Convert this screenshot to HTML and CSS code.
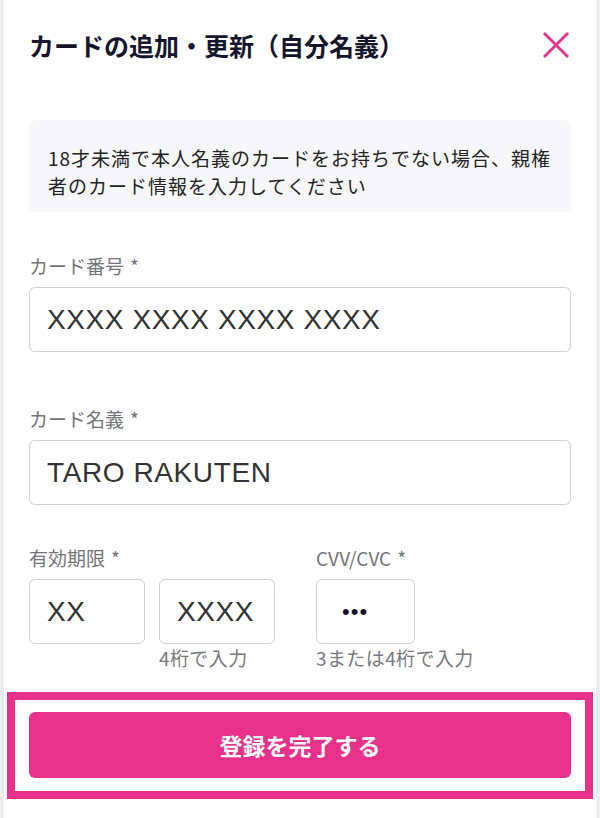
FILE: index.html
```html
<!DOCTYPE html>
<html lang="ja">

<head>
  <meta charset="UTF-8">
  <meta name="viewport" content="width=device-width, initial-scale=1.0">
  <title>カードの追加・更新</title>
  <link rel="stylesheet" href="styles.css">
</head>

<body>
  <div class="sheet">
    <header class="head">
      <h1 class="title">カードの追加・更新（自分名義）</h1>
      <button class="close" aria-label="閉じる">
        <svg width="28" height="28" viewBox="0 0 28 28">
          <path d="M2 2 L26 26 M26 2 L2 26" stroke="#dc3a8d" stroke-width="3" fill="none" />
        </svg>
      </button>
    </header>

    <p class="note">18才未満で本人名義のカードをお持ちでない場合、親権者のカード情報を入力してください</p>

    <div class="field card-no">
      <label class="label">カード番号<span class="req">*</span></label>
      <div class="input">XXXX XXXX XXXX XXXX</div>
    </div>

    <div class="field card-name">
      <label class="label">カード名義<span class="req">*</span></label>
      <div class="input">TARO RAKUTEN</div>
    </div>

    <div class="row">
      <div class="field">
        <label class="label">有効期限<span class="req">*</span></label>
        <div class="pair">
          <div>
            <div class="input small">XX</div>
          </div>
          <div>
            <div class="input small">XXXX</div>
            <div class="hint">4桁で入力</div>
          </div>
        </div>
      </div>
      <div class="field">
        <label class="label">CVV/CVC<span class="req">*</span></label>
        <div class="input cvv"><span class="dots">•••</span></div>
        <div class="hint">3または4桁で入力</div>
      </div>
    </div>

    <div class="submit-wrap">
      <button class="submit">登録を完了する</button>
    </div>
  </div>
</body>

</html>
```

FILE: styles.css
```css
body {
  margin: 0;
  background: #ececf1;
  font-family: 'Noto Sans CJK JP', sans-serif;
}

.sheet {
  margin: 0 4px;
  min-height: 818px;
  padding: 0 25px;
  background: #fff;
  box-sizing: border-box;
}

.head {
  height: 90px;
  display: flex;
  align-items: center;
  justify-content: space-between;
}

.title {
  margin: 0;
  font-size: 25px;
  font-weight: 700;
  color: #15152b;
}

.close {
  border: 0;
  background: none;
  padding: 0;
  margin-right: 1px;
  width: 28px;
  height: 28px;
}

.note {
  margin: 30px 0 0;
  padding: 24px 18px 12px 19px;
  background: #f7f7fa;
  border-radius: 6px;
  font-size: 19px;
  line-height: 28px;
  letter-spacing: 1px;
  color: #222;
}

.card-no {
  margin-top: 43px;
}

.card-name {
  margin-top: 56px;
}

.row {
  margin-top: 42px;
  display: flex;
  gap: 41px;
}

.label {
  display: block;
  font-size: 19px;
  line-height: 22px;
  color: #737378;
  margin-bottom: 10px;
}

.req {
  margin-left: 6px;
}

.input {
  height: 65px;
  box-sizing: border-box;
  border: 1px solid #cfcfd5;
  border-radius: 6px;
  padding-left: 17px;
  display: flex;
  align-items: center;
  font-family: 'Liberation Sans', Arial, sans-serif;
  font-size: 28px;
  letter-spacing: 0.6px;
  color: #333;
}

.pair {
  display: flex;
  gap: 14px;
}

.small {
  width: 116px;
}

.cvv {
  width: 99px;
  padding-left: 25px;
}

.dots {
  font-size: 22px;
  letter-spacing: 1px;
  color: #10102a;
}

.hint {
  font-size: 19px;
  line-height: 22px;
  letter-spacing: 0.4px;
  color: #77777c;
  margin-top: 3px;
}

.submit-wrap {
  margin: 23px -22px 0;
  border: 8px solid #e8318a;
  padding: 12px 14px 13px;
}

.submit {
  display: block;
  width: 100%;
  height: 66px;
  border: 0;
  border-radius: 6px;
  background: #e8318a;
  color: #fff;
  font-family: 'Noto Sans CJK JP', sans-serif;
  font-size: 23px;
  font-weight: 700;
}
```
